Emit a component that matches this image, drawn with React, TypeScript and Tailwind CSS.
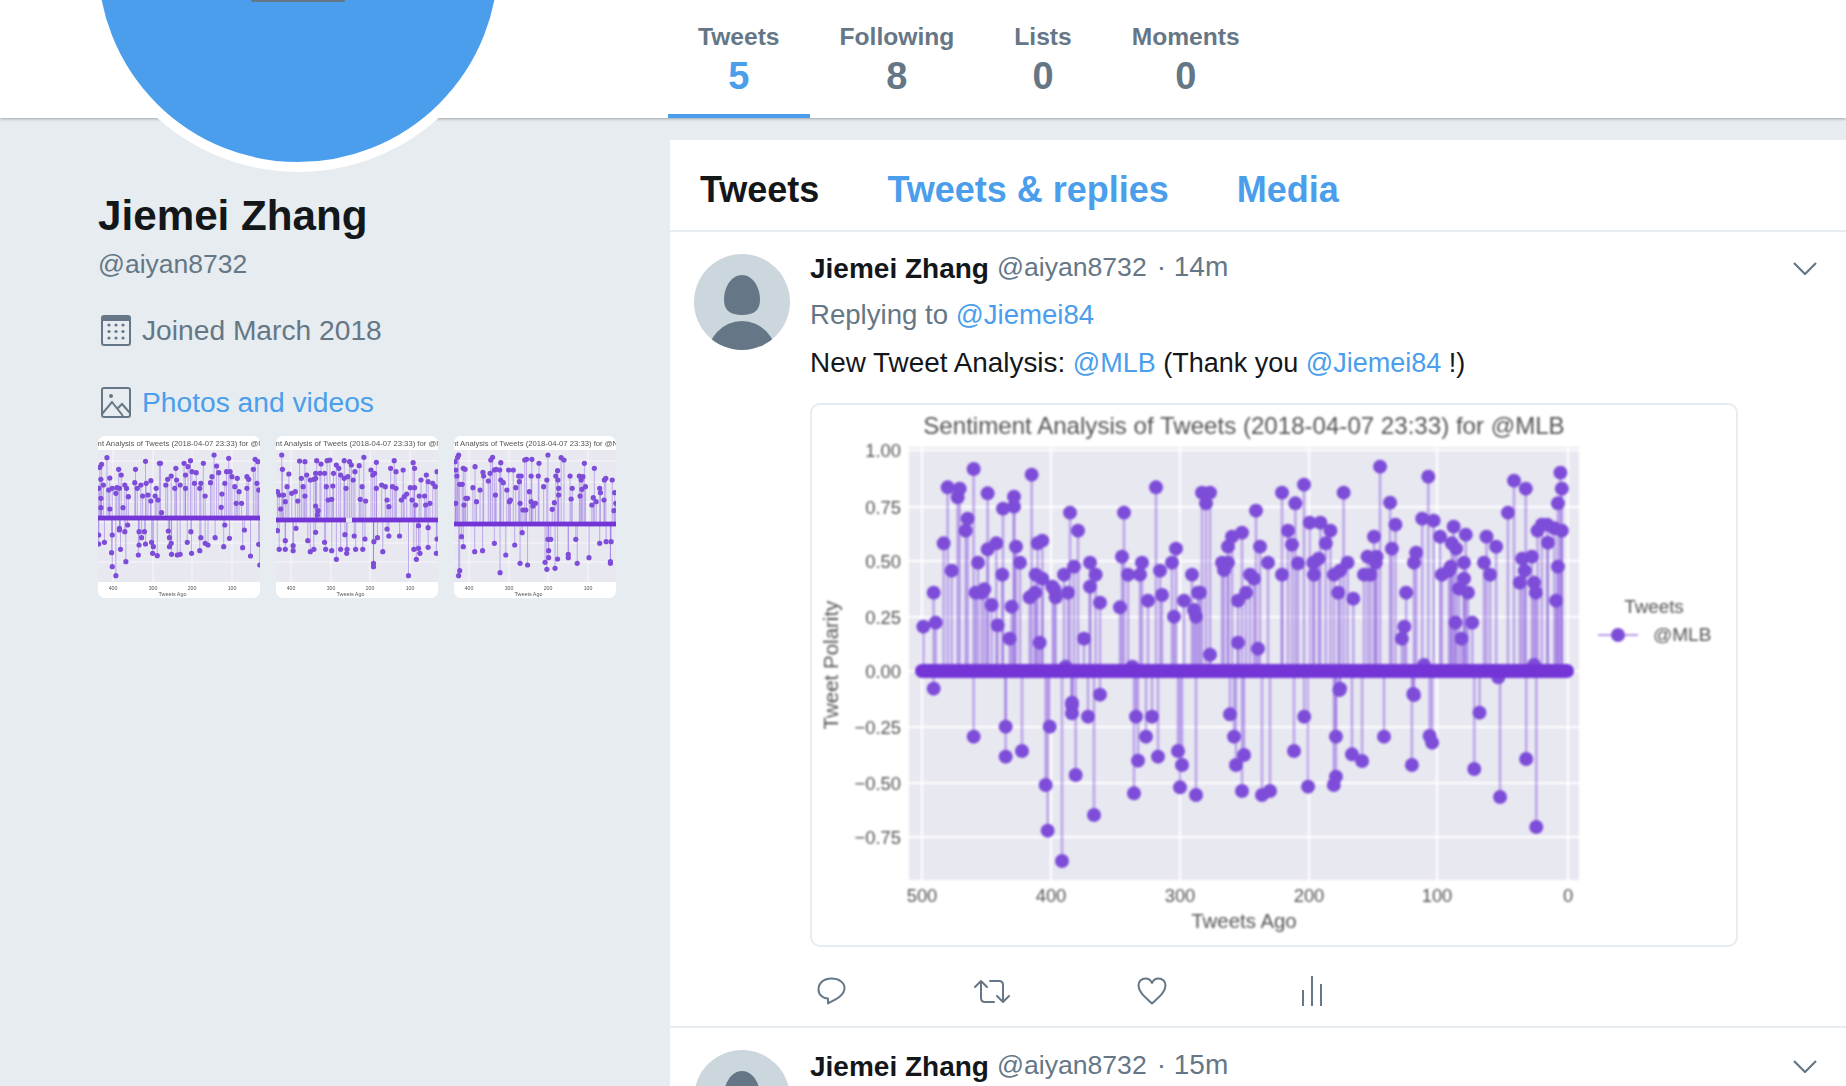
const POS: [number, number][] = [[373,680],[404,578],[410,668],[434,430],[446,262],[458,512],[476,292],[482,266],[500,392],[506,356],[524,207],[530,578],[537,488],[548,578],[556,568],[566,280],[566,448],[578,615],[592,430],[596,676],[610,524],[612,326],[632,716],[638,620],[645,290],[645,320],[651,440],[663,488],[692,592],[698,224],[708,578],[710,524],[716,430],[722,728],[730,422],[730,536],[760,560],[766,568],[770,592],[795,524],[807,578],[813,338],[825,500],[837,392],[855,716],[873,488],[873,560],[890,524],[903,608],[963,622],[969,470],[975,338],[987,524],[1023,524],[1029,488],[1047,602],[1071,262],[1083,512],[1089,585],[1119,488],[1125,650],[1131,446],[1155,602],[1179,524],[1185,630],[1191,650],[1197,578],[1203,578],[1209,278],[1221,310],[1233,278],[1233,764],[1269,488],[1275,510],[1287,488],[1287,440],[1299,410],[1317,602],[1317,728],[1329,398],[1341,578],[1353,524],[1365,536],[1371,332],[1377,746],[1383,440],[1407,488],[1449,278],[1449,524],[1467,392],[1479,434],[1489,310],[1497,490],[800,800],[1000,800],[404,866],[819,908],[903,884]]
const POS_RIGHT: [number, number][] = [[294,254],[310,368],[340,368],[368,392],[355,430],[320,488],[335,476],[322,524],[378,524],[390,578],[395,512],[405,278],[416,488],[432,596],[462,524],[480,524],[472,470],[497,470],[490,410],[495,488],[507,200],[535,308],[550,374],[540,446],[580,578],[575,680],[568,716],[608,458],[602,488],[625,356],[642,230],[657,362],[675,410],[680,524],[700,512],[705,500],[713,380],[708,430],[720,446],[747,404],[742,488],[742,536],[728,566],[753,578],[718,668],[735,716],[765,668],[798,488],[805,410],[815,524],[832,440],[865,338],[882,242],[915,266],[898,548],[905,476],[912,512],[932,470],[938,548],[943,578],[948,392],[960,374],[975,374],[977,428],[995,385],[1005,310],[1012,218],[1016,266],[1016,392],[1005,500],[1000,602],[395,866],[600,882],[838,832],[630,795],[938,795]]
const NEG_LEFT: [number, number][] = [[524,140],[620,110],[620,200],[669,183],[740,285],[746,422],[752,110],[789,513],[819,45],[819,70],[830,255],[867,80],[885,375],[1005,310],[1011,80],[1017,212],[1041,140],[1059,80],[1077,200],[1137,183],[1143,292],[1149,225],[1191,315],[1293,73],[1305,140],[1311,225],[1329,303],[1335,195],[1389,315],[1413,303],[1485,183]]
const NEG_RIGHT: [number, number][] = [[15,80],[26,290],[106,140],[100,285],[106,260],[116,0],[152,193],[181,213],[244,140],[324,225],[330,15],[375,138],[382,158],[503,237],[518,68],[577,321],[652,207],[681,411]]

const DOTS: [number, number][] = [
  ...POS.map(([x, y]): [number, number] => [800 + x / 3, 400 + y / 3]),
  ...POS_RIGHT.map(([x, y]): [number, number] => [1200 + x / 2.8, 400 + y / 3]),
  ...NEG_LEFT.map(([x, y]): [number, number] => [800 + x / 3, 690 + y / 3]),
  ...NEG_RIGHT.map(([x, y]): [number, number] => [1300 + x / 2.87, 690 + y / 3]),
]

const T1 = [[75,113],[60,133],[55,142],[58,178],[65,195],[52,205],[80,210],[83,174],[90,205],[100,220],[58,235],[58,263],[83,267],[108,148],[115,165],[125,195],[130,205],[110,205],[103,203],[120,263],[135,230],[155,148],[153,188],[160,205],[170,195],[183,124],[185,190],[198,182],[175,228],[190,225],[198,243],[210,228],[218,240],[225,130],[222,130],[213,205],[228,278],[240,195],[245,178],[255,168],[268,145],[270,180],[265,205],[280,195],[291,130],[295,205],[302,140],[309,122],[295,165],[313,155],[320,190],[325,158],[335,205],[345,130],[350,228],[338,190],[369,170],[375,105],[382,138],[365,188],[388,158],[395,262],[397,222],[405,190],[410,155],[416,115],[420,155],[425,170],[433,200],[440,175],[437,250],[452,250],[445,215],[467,170],[472,178],[467,205],[485,148],[490,118],[498,125],[495,190],[500,210],[52,345],[52,372],[68,367],[88,398],[90,345],[90,440],[100,467],[110,325],[110,330],[113,388],[125,335],[128,425],[133,315],[165,335],[165,375],[163,405],[172,353],[180,335],[183,372],[200,367],[205,380],[203,400],[216,407],[247,333],[250,353],[255,370],[250,380],[256,403],[272,405],[280,403],[300,367],[310,335],[312,400],[335,392],[338,353],[350,370],[358,375],[378,353],[402,380],[405,315],[418,355],[455,383],[460,330],[477,408],[500,373],[503,435]]
const T2 = [[565,105],[567,148],[553,215],[558,225],[570,225],[580,200],[585,162],[575,245],[562,267],[610,243],[593,220],[603,215],[615,123],[630,125],[620,175],[625,200],[630,228],[635,165],[645,180],[655,178],[660,175],[663,122],[660,160],[672,160],[675,132],[692,122],[700,120],[690,200],[695,240],[685,160],[710,160],[708,198],[705,238],[718,135],[725,145],[730,165],[740,122],[755,125],[760,135],[745,205],[740,175],[750,170],[765,180],[770,155],[782,137],[795,112],[790,200],[785,238],[800,243],[815,150],[830,127],[825,160],[830,205],[820,165],[860,240],[865,260],[880,122],[885,155],[870,145],[875,200],[885,205],[845,195],[855,200],[905,150],[900,240],[908,230],[915,222],[933,128],[937,145],[925,203],[937,203],[930,240],[940,255],[955,180],[950,228],[965,228],[970,165],[975,185],[968,255],[980,250],[988,190],[1000,155],[995,200],[660,258],[667,272],[665,285],[553,332],[558,388],[575,388],[575,362],[597,377],[597,392],[605,325],[638,362],[645,395],[655,388],[660,337],[685,367],[688,388],[705,392],[718,418],[730,388],[742,344],[747,400],[748,388],[768,348],[772,388],[792,388],[798,357],[822,430],[822,440],[823,365],[833,353],[848,395],[860,327],[865,348],[895,348],[920,467],[935,388],[942,418],[948,385],[952,400],[948,317],[975,323],[975,382],[998,400],[1000,357]]
const T3 = [[1060,105],[1057,112],[1050,125],[1052,150],[1055,168],[1063,193],[1070,193],[1073,145],[1078,148],[1075,255],[1080,235],[1085,235],[1052,250],[1100,203],[1106,140],[1110,245],[1120,210],[1128,157],[1130,168],[1143,183],[1148,160],[1150,120],[1155,112],[1160,150],[1165,148],[1163,225],[1175,150],[1178,128],[1178,180],[1185,188],[1195,210],[1202,245],[1205,240],[1200,150],[1213,150],[1220,203],[1228,168],[1235,168],[1230,185],[1232,250],[1245,120],[1250,118],[1240,270],[1248,270],[1258,215],[1263,168],[1263,245],[1265,118],[1268,258],[1275,250],[1285,130],[1283,168],[1298,200],[1307,180],[1310,105],[1322,268],[1328,248],[1332,168],[1337,152],[1338,180],[1340,205],[1340,225],[1347,113],[1355,120],[1372,168],[1375,237],[1378,205],[1398,168],[1400,228],[1403,180],[1408,170],[1405,208],[1412,130],[1415,200],[1433,255],[1440,145],[1437,233],[1445,245],[1455,205],[1457,218],[1468,180],[1472,175],[1467,240],[1490,180],[1497,218],[1495,272],[1500,250],[1068,350],[1073,380],[1063,452],[1060,467],[1105,395],[1127,392],[1160,370],[1176,458],[1192,405],[1217,375],[1238,338],[1232,430],[1253,435],[1302,427],[1310,358],[1318,358],[1312,392],[1312,413],[1307,448],[1330,445],[1337,417],[1367,403],[1367,413],[1388,358],[1392,430],[1425,413],[1455,370],[1473,365],[1487,365],[1485,425],[1485,430]]

const CHART_TEXT = "'Liberation Sans', Arial, sans-serif"

function Thumb({ pts, left, zero, title, gap }: { pts: number[][]; left: number; zero: number; title: string; gap?: boolean }) {
  const px = (x: number) => (x - left) / 2.8
  const py = (y: number) => (y - 48) / 3
  return (
    <div className="w-[162px] h-[162px] rounded-[7px] bg-white overflow-hidden shrink-0">
      <svg viewBox="0 0 162 162" className="block w-full h-full blur-[0.6px]" fontFamily={CHART_TEXT}>
        <rect x="0" y="14" width="162" height="132" fill="#e8e8f1" />
        {[19, 40, 60, 80, 101, 120].map((y) => (
          <line key={y} x1="0" x2="162" y1={y + 6} y2={y + 6} stroke="#fff" strokeWidth="0.6" />
        ))}
        {[15, 55, 94, 134].map((x) => (
          <line key={x} x1={x} x2={x} y1="14" y2="146" stroke="#fff" strokeWidth="0.6" />
        ))}
        {pts.map(([x, y], i) => (
          <line key={i} x1={px(x)} x2={px(x)} y1={py(y)} y2={zero} stroke="#8a5ae0" strokeOpacity="0.5" strokeWidth="0.9" />
        ))}
        {pts.map(([x, y], i) => (
          <circle key={i} cx={px(x)} cy={py(y)} r="2.6" fill="#7d4cd8" />
        ))}
        <rect x="0" y={zero - 2.4} width="162" height="4.8" fill="#7335d6" />
        {gap && <rect x="70" y={zero - 2.6} width="6" height="5.2" fill="#e8e8f1" />}
        <text x="81" y="9.5" textAnchor="middle" fontSize="7.7" fill="#555">{title}</text>
        {[['400', 15], ['300', 55], ['200', 94], ['100', 134]].map(([t, x]) => (
          <text key={t} x={x} y="153.5" textAnchor="middle" fontSize="5.2" fill="#555">{t}</text>
        ))}
        <text x="74.5" y="159.5" textAnchor="middle" fontSize="5.4" fill="#555">Tweets Ago</text>
      </svg>
    </div>
  )
}

function Chart() {
  const zeroY = 671
  const yTicks: [string, number][] = [['1.00', 450], ['0.75', 507], ['0.50', 561], ['0.25', 617], ['0.00', 671], ['−0.25', 727], ['−0.50', 783], ['−0.75', 837]]
  const xTicks: [string, number][] = [['500', 923], ['400', 1052], ['300', 1181], ['200', 1310], ['100', 1438], ['0', 1569]]
  return (
    <div className="w-[928px] h-[544px] rounded-[10px] border-2 border-[#e6ecf0] overflow-hidden bg-white">
      <svg viewBox="813 405 924 540" className="block w-full h-full blur-[0.8px]" fontFamily={CHART_TEXT}>
        <text x="1245" y="434" textAnchor="middle" fontSize="24.1" fill="#555">Sentiment Analysis of Tweets (2018-04-07 23:33) for @MLB</text>
        <rect x="910" y="447" width="670" height="433" fill="#e8e8f1" />
        {yTicks.map(([t, y]) => (
          <g key={t}>
            <line x1="910" x2="1580" y1={y} y2={y} stroke="#fff" strokeWidth="2" />
            <text x="902" y={y + 7} textAnchor="end" fontSize="18.4" fill="#555">{t}</text>
          </g>
        ))}
        {xTicks.map(([t, x]) => (
          <g key={t}>
            <line x1={x} x2={x} y1="447" y2="880" stroke="#fff" strokeWidth="2" />
            <text x={x} y="902" textAnchor="middle" fontSize="18.4" fill="#555">{t}</text>
          </g>
        ))}
        {DOTS.map(([x, y], i) => (
          <line key={i} x1={x} x2={x} y1={y} y2={zeroY} stroke="#8a5ae0" strokeOpacity="0.5" strokeWidth="2.4" />
        ))}
        {DOTS.map(([x, y], i) => (
          <circle key={i} cx={x} cy={y} r="7" fill="#7d4cd8" />
        ))}
        <line x1="923" x2="1568" y1={zeroY} y2={zeroY} stroke="#7335d6" strokeWidth="14" strokeLinecap="round" />
        <text x="1245" y="928" textAnchor="middle" fontSize="20.4" fill="#555">Tweets Ago</text>
        <text x="0" y="0" transform="translate(839 665) rotate(-90)" textAnchor="middle" fontSize="20.5" fill="#555">Tweet Polarity</text>
        <text x="1655" y="613" textAnchor="middle" fontSize="18.8" fill="#555">Tweets</text>
        <line x1="1599" x2="1639" y1="635" y2="635" stroke="#8a5ae0" strokeOpacity="0.6" strokeWidth="2" />
        <circle cx="1619" cy="635" r="7" fill="#7d4cd8" />
        <text x="1654" y="641" fontSize="19" fill="#555">@MLB</text>
      </svg>
    </div>
  )
}

function Avatar() {
  return (
    <svg viewBox="0 0 96 96" className="w-[96px] h-[96px] shrink-0 rounded-full bg-[#ccd6dd]">
      <path d="M48 21 C58 21 66 32 66 46 C66 56 60 61 48 61 C36 61 30 56 30 46 C30 32 38 21 48 21Z" fill="#657786" />
      <ellipse cx="48" cy="104" rx="35" ry="37" fill="#657786" />
    </svg>
  )
}

function Chevron() {
  return (
    <svg viewBox="0 0 24 13" className="w-[24px] h-[13px]" fill="none" stroke="#657786" strokeWidth="2.2">
      <path d="M1 1 L12 12 L23 1" />
    </svg>
  )
}

function TweetHead({ time }: { time: string }) {
  return (
    <div className="flex items-baseline h-[34px]">
      <span className="text-[28px] leading-[34px] font-bold text-[#14171a]">Jiemei Zhang</span>
      <span className="ml-[8px] text-[26.6px] leading-[30px] text-[#657786] relative -top-[2px]">@aiyan8732</span>
      <span className="ml-[10px] text-[28px] leading-[30px] text-[#657786] relative -top-[2px]">· {time}</span>
    </div>
  )
}

function Actions() {
  return (
    <div className="flex items-center mt-[28px] h-[32px]">
      <div className="w-[160px] shrink-0">
        <svg viewBox="0 0 29 28" className="ml-[7px] w-[29px] h-[28px]" fill="none" stroke="#657786" strokeWidth="2" strokeLinejoin="round">
          <path d="M14.5 1.5 C7 1.5 1.5 6 1.5 12.5 C1.5 18 6 21.5 11 21.5 V26.5 C17 23 27.5 19 27.5 11 C27.5 5.5 22 1.5 14.5 1.5Z" />
        </svg>
      </div>
      <div className="w-[160px] shrink-0">
        <svg viewBox="0 0 36 25" className="ml-[4px] w-[36px] h-[25px]" fill="none" stroke="#657786" strokeWidth="2" strokeLinejoin="round" strokeLinecap="round">
          <path d="M1 8 L7 2 L13 8 M7 2 V19 Q7 23 11 23 H20 M16 2 H25 Q29 2 29 6 V23 M23 17 L29 23 L35 17" />
        </svg>
      </div>
      <div className="w-[160px] shrink-0">
        <svg viewBox="0 0 30 28" className="ml-[7px] w-[30px] h-[28px]" fill="none" stroke="#657786" strokeWidth="2" strokeLinejoin="round">
          <path d="M15 26.5 C8 20 1.5 15 1.5 8.5 C1.5 4 5 1.5 8.5 1.5 C11.5 1.5 14 3.5 15 6 C16 3.5 18.5 1.5 21.5 1.5 C25 1.5 28.5 4 28.5 8.5 C28.5 15 22 20 15 26.5Z" />
        </svg>
      </div>
      <div className="w-[160px] shrink-0">
        <svg viewBox="0 0 20 30" className="ml-[12px] w-[20px] h-[30px]" fill="none" stroke="#657786" strokeWidth="2">
          <path d="M1 14 V30 M10 0 V30 M19 8 V30" />
        </svg>
      </div>
    </div>
  )
}

const stats = [
  { label: 'Tweets', value: '5', active: true },
  { label: 'Following', value: '8' },
  { label: 'Lists', value: '0' },
  { label: 'Moments', value: '0' },
]

export default function App() {
  return (
    <div className="relative w-full h-[1086px] overflow-hidden bg-[#e6ecf0] font-['Liberation_Sans',Arial,sans-serif]">
      {/* header */}
      <div className="relative z-10 h-[118px] bg-white shadow-[0_1px_3px_rgba(0,0,0,0.3)] pl-[668px] flex">
        {stats.map((s) => (
          <div key={s.label} className={`px-[30px] h-[118px] flex flex-col items-center pt-[22px] border-b-4 ${s.active ? 'border-[#4a9eeb]' : 'border-transparent'}`}>
            <div className="text-[24.6px] leading-[30px] font-bold text-[#657786]">{s.label}</div>
            <div className={`text-[38px] leading-[40px] font-bold mt-[4px] ${s.active ? 'text-[#4a9eeb]' : 'text-[#657786]'}`}>{s.value}</div>
          </div>
        ))}
      </div>

      {/* profile photo sits over header */}
      <div className="absolute z-20 left-[88px] -top-[248px] w-[420px] h-[420px] rounded-full border-[10px] border-white bg-[#4a9eeb]">
        <div className="absolute left-[153px] top-[238px] w-[94px] h-[2px] rounded-b bg-[#657786]" />
      </div>

      <div className="flex">
        <aside className="w-[670px] shrink-0 pl-[98px] pt-[74px]">
          <div className="text-[42.2px] leading-[48px] font-bold text-[#14171a]">Jiemei Zhang</div>
          <div className="text-[26.5px] leading-[32px] text-[#657786] mt-[8px]">@aiyan8732</div>
          <div className="flex items-center h-[36px] mt-[32px] text-[28.2px] text-[#657786]">
            <svg viewBox="0 0 30 31" className="ml-[3px] w-[30px] h-[31px] shrink-0">
              <rect x="1" y="1" width="28" height="29" rx="2" fill="none" stroke="#657786" strokeWidth="2" />
              <rect x="1" y="1" width="28" height="5" fill="#657786" />
              {[10, 16.5, 23].map((y) =>
                [8, 15, 22].map((x) => <circle key={`${x}-${y}`} cx={x} cy={y} r="1.6" fill="#657786" />),
              )}
            </svg>
            <span className="ml-[11px]">Joined March 2018</span>
          </div>
          <div className="flex items-center h-[36px] mt-[36px] text-[28.2px] text-[#4a9eeb]">
            <svg viewBox="0 0 30 31" className="ml-[3px] w-[30px] h-[31px] shrink-0" fill="none" stroke="#657786" strokeWidth="2">
              <rect x="1" y="1" width="28" height="29" rx="2" />
              <circle cx="10" cy="9" r="2" fill="#657786" stroke="none" />
              <path d="M1 27 L11 15 L22 29 M16 22 L21 17 L29 26" />
            </svg>
            <span className="ml-[11px]">Photos and videos</span>
          </div>
          <div className="flex gap-[16px] mt-[16px]">
            <Thumb pts={T1} left={50} zero={82} title="ent Analysis of Tweets (2018-04-07 23:33) for @M" />
            <Thumb pts={T2} left={549} zero={84} gap title="ent Analysis of Tweets (2018-04-07 23:33) for @M" />
            <Thumb pts={T3} left={1047} zero={88} title="nt Analysis of Tweets (2018-04-07 23:33) for @N" />
          </div>
        </aside>

        <main className="flex-1 mt-[22px] bg-white min-h-[1000px]">
          <div className="flex items-center h-[92px] pl-[30px] pt-[9px] border-b-2 border-[#e6ecf0] text-[36px] font-bold">
            <span className="text-[#14171a]">Tweets</span>
            <span className="ml-[68px] text-[#4a9eeb]">Tweets &amp; replies</span>
            <span className="ml-[68px] text-[#4a9eeb]">Media</span>
          </div>

          <div className="relative flex gap-[20px] pl-[24px] pt-[22px] h-[796px] border-b-2 border-[#e6ecf0]">
            <Avatar />
            <div className="-mt-[2px]">
              <TweetHead time="14m" />
              <div className="text-[27.6px] leading-[34px] mt-[12px] text-[#657786]">
                Replying to <span className="text-[#4a9eeb]">@Jiemei84</span>
              </div>
              <div className="text-[27px] leading-[34px] mt-[14px] text-[#14171a]">
                <span className="text-[27.9px]">New Tweet Analysis:</span> <span className="text-[#4a9eeb]">@MLB</span> (Thank you <span className="text-[#4a9eeb]">@Jiemei84</span> !)
              </div>
              <div className="mt-[23px]">
                <Chart />
              </div>
              <Actions />
            </div>
            <div className="absolute right-[29px] top-[30px]">
              <Chevron />
            </div>
          </div>

          <div className="relative flex gap-[20px] pl-[24px] pt-[22px]">
            <Avatar />
            <div>
              <TweetHead time="15m" />
            </div>
            <div className="absolute right-[29px] top-[32px]">
              <Chevron />
            </div>
          </div>
        </main>
      </div>
    </div>
  )
}
